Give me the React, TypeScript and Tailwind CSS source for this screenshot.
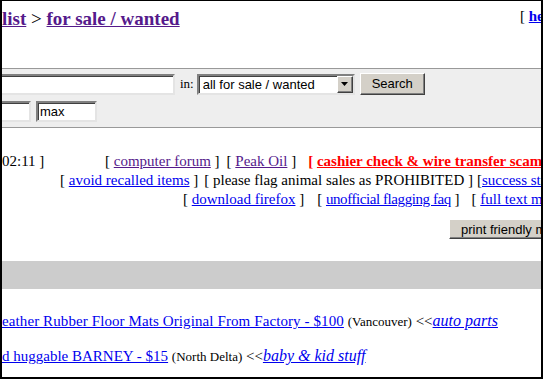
import React from 'react';

const inset =
  "border-2 border-t-[#808080] border-l-[#808080] border-b-[#e4e4e4] border-r-[#e4e4e4] bg-white shadow-[inset_1px_1px_0_#404040]";
const raised =
  "border border-t-white border-l-white border-b-[#404040] border-r-[#404040] bg-[#d4d0c8] shadow-[inset_-1px_-1px_0_#808080]";
const sans = "[font-family:'Liberation_Sans',Arial,sans-serif]";

function Link({ children, className = '' }: { children: React.ReactNode; className?: string }) {
  return <a className={`underline cursor-pointer ${className}`}>{children}</a>;
}

export default function App() {
  return (
    <div className="w-[543px] h-[379px] overflow-hidden bg-white border-t border-l-2 border-r-2 border-b-2 border-black [font-family:'Liberation_Serif','Times_New_Roman',serif] text-[15px] text-black whitespace-nowrap">
      {/* Header */}
      <div className="h-[67px] flex items-start">
        <div className="w-[518px] shrink-0 mt-[7px] text-[19px] leading-[22px]">
          <Link className="text-[#551a8b] font-bold">list</Link> &gt;{' '}
          <Link className="text-[#551a8b] font-bold">for sale / wanted</Link>
        </div>
        <div className="shrink-0 mt-[7px] leading-[17px]">
          [ <Link className="text-[#0000ee] font-bold">help</Link> ]
        </div>
      </div>

      {/* Search box */}
      <div className="border-t border-b border-[#999999] bg-[#eeeeee] pt-[4px] pb-[5px]">
        <div className="h-[22px] flex items-center">
          <input
            className={`${inset} ${sans} w-[200px] h-[21px] -ml-[27px] text-[13px] px-[2px] outline-none`}
          />
          <span className="ml-[5px] text-[13px]">in:</span>
          <div className={`${inset} ${sans} ml-[3px] w-[158px] h-[21px] flex items-center text-[13px]`}>
            <span className="flex-1 pl-[4px] leading-[17px]">all for sale / wanted</span>
            <div className={`${raised} w-[16px] h-[17px] flex items-center justify-center`}>
              <svg width="7" height="4" viewBox="0 0 7 4">
                <polygon points="0,0 7,0 3.5,4" fill="#000" />
              </svg>
            </div>
          </div>
          <button className={`${raised} ${sans} ml-[5px] w-[65px] h-[22px] text-[13px] text-black`}>
            Search
          </button>
        </div>
        <div className="mt-[6px] h-[21px] flex items-center">
          <input className={`${inset} ${sans} w-[60px] h-[21px] -ml-[31px] text-[13px] outline-none`} />
          <input
            className={`${inset} ${sans} ml-[5px] w-[61px] h-[21px] text-[13px] pl-[2px] outline-none`}
            defaultValue="max"
          />
        </div>
      </div>

      {/* Top link rows */}
      <div className="mt-[23px] h-[20px] leading-[20px] flex">
        <span className="w-[103px] shrink-0">02:11 ]</span>
        <span>
          [ <Link className="text-[#551a8b]">computer forum</Link> ]
        </span>
        <span className="ml-[7px]">
          [ <Link className="text-[#551a8b]">Peak Oil</Link> ]
        </span>
        <span className="ml-[12px] text-[#ff0000] font-bold">
          [ <Link className="text-[#ff0000]">cashier check &amp; wire transfer scams</Link> ]
        </span>
      </div>
      <div className="h-[19px] leading-[19px] flex pl-[58px]">
        <span>
          [ <Link className="text-[#0000ee]">avoid recalled items</Link> ]
        </span>
        <span className="ml-[6px]">[ please flag animal sales as PROHIBITED ]</span>
        <span className="ml-[4px]">
          [<Link className="text-[#0000ee]">success stories</Link> ]
        </span>
      </div>
      <div className="h-[19px] leading-[19px] flex pl-[181px]">
        <span>
          [ <Link className="text-[#0000ee]">download firefox</Link> ]
        </span>
        <span className="ml-[13px]">
          [ <Link className="text-[#0000ee] tracking-[-0.43px]">unofficial flagging faq</Link> ]
        </span>
        <span className="ml-[12px]">
          [ <Link className="text-[#0000ee]">full text mode</Link> ]
        </span>
      </div>

      {/* Print button */}
      <div className="mt-[10px] flex">
        <button
          className={`${raised} ${sans} ml-[447px] shrink-0 h-[20px] pl-[11px] pr-[11px] text-[13px] text-black`}
        >
          print friendly mode
        </button>
      </div>

      {/* Gray bar */}
      <div className="mt-[22px] h-[28px] bg-[#cccccc]" />

      {/* Listings */}
      <div className="mt-[22px] h-[20px] leading-[20px]">
        <Link className="text-[#0000ee] tracking-[0.1px]">eather Rubber Floor Mats Original From Factory - $100</Link>{' '}
        <span className="text-[13px]">(Vancouver)</span> &lt;&lt;
        <i className="text-[16px]">
          <Link className="text-[#0000ee]">auto parts</Link>
        </i>
      </div>
      <div className="mt-[15px] h-[20px] leading-[20px]">
        <Link className="text-[#0000ee]">d huggable BARNEY - $15</Link>{' '}
        <span className="text-[13px]">(North Delta)</span> &lt;&lt;
        <i className="text-[16px]">
          <Link className="text-[#0000ee]">baby &amp; kid stuff</Link>
        </i>
      </div>
    </div>
  );
}
